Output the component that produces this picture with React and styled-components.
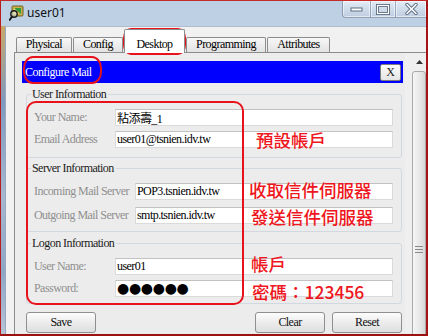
import React from 'react';
import styled, { createGlobalStyle } from 'styled-components';

const GlobalStyle = createGlobalStyle`
  html, body { margin: 0; padding: 0; background: #ffffff; }
  body { font-family: "Liberation Serif", "Noto Sans CJK TC", serif; }
  * { box-sizing: border-box; }
`;

const Window = styled.div`
  position: relative;
  width: 428px;
  height: 336px;
  overflow: hidden;
  border-top: 1px solid #c42a2a;
  border-left: 1px solid #b81c1c;
  border-right: 2px solid #a51414;
  border-bottom: 2px solid #9c1010;
  background: linear-gradient(180deg, #bccfe3 0%, #c8d8ea 45%, #d9e5f1 100%);
  display: flex;
  flex-direction: column;
`;

const TitleBar = styled.div`
  height: 25px;
  flex: none;
  display: flex;
  align-items: flex-start;
`;

const AppIcon = styled.svg`
  margin: 4px 0 0 8px;
  flex: none;
`;

const TitleText = styled.span`
  margin: 4px 0 0 3px;
  font-family: "Noto Sans", "DejaVu Sans", sans-serif;
  font-size: 12px;
  line-height: 16px;
  color: #111;
`;

const CaptionGroup = styled.div`
  margin-left: auto;
  height: 17px;
  display: flex;
  border: 1px solid rgba(80, 100, 130, 0.55);
  border-top: none;
  border-right: none;
  border-radius: 0 0 0 4px;
  overflow: hidden;
  background: linear-gradient(180deg, #e4ecf6 0%, #cfdcea 50%, #bfcde0 100%);
`;

const CaptionButton = styled.div`
  width: ${p => p.$w}px;
  display: flex;
  align-items: center;
  justify-content: center;
  border-right: 1px solid rgba(80, 100, 130, 0.45);
  box-shadow: inset 0 0 0 1px rgba(255, 255, 255, 0.55);
  &:last-child { border-right: none; }
`;

const Body = styled.div`
  flex: 1;
  display: flex;
  min-height: 0;
`;

const LeftStrip = styled.div`
  width: 4px;
  flex: none;
  background: linear-gradient(180deg, #c9a868 0%, #7f9ac0 25%, #a6b7cf 55%, #8ea6c6 80%, #b7c4d6 100%);
`;

const Client = styled.div`
  flex: 1;
  display: flex;
  flex-direction: column;
  background: #f1f1f1;
  border-left: 1px solid #96a8bd;
  border-top: 1px solid #aebdcd;
  min-width: 0;
`;

const TabRow = styled.div`
  height: 25px;
  flex: none;
  display: flex;
  align-items: flex-end;
  gap: 1px;
  padding-left: 10px;
`;

const Tab = styled.div`
  width: ${p => p.$w}px;
  height: ${p => (p.$active ? 24 : 15)}px;
  margin-bottom: ${p => (p.$active ? -1 : 0)}px;
  position: relative;
  z-index: ${p => (p.$active ? 1 : 0)};
  border: 1px solid #8c8c8c;
  border-bottom: none;
  border-radius: 2px 2px 0 0;
  background: ${p => (p.$active ? '#ffffff' : 'linear-gradient(180deg, #f7f7f7 0%, #e2e2e2 100%)')};
  display: flex;
  align-items: flex-end;
  justify-content: center;
  padding-bottom: ${p => (p.$active ? 2 : 1)}px;
  font-size: 12px;
  line-height: 13px;
  letter-spacing: -0.55px;
  color: #000;
`;

const Panel = styled.div`
  flex: 1;
  margin-left: 8px;
  display: flex;
  padding: 8px 0 0 7px;
  background: #ececec;
  border-top: 1px solid #8c8c8c;
  border-left: 1px solid #8c8c8c;
  min-height: 0;
`;

const Content = styled.div`
  width: 381px;
  flex: none;
  display: flex;
  flex-direction: column;
`;

const BlueBar = styled.div`
  height: 22px;
  background: #0000ff;
  display: flex;
  align-items: center;
  justify-content: space-between;
  padding: 0 2px 0 3px;
  color: #ffffff;
  font-size: 12px;
  letter-spacing: -0.55px;
`;

const CloseBox = styled.div`
  width: 21px;
  height: 17px;
  display: flex;
  align-items: center;
  justify-content: center;
  border: 1px solid #7c7c7c;
  border-radius: 2px;
  background: linear-gradient(180deg, #fbfbfb 0%, #e4e4e4 100%);
  color: #222;
  font-size: 12px;
  letter-spacing: 0;
`;

const Group = styled.div`
  position: relative;
  margin: ${p => p.$mt}px 1px 0 4px;
  padding: 14px 8px ${p => p.$pb}px 7px;
  border: 1px solid #d2d8df;
  border-radius: 3px;
  display: flex;
  flex-direction: column;
  gap: ${p => p.$gap}px;
`;

const GroupTitle = styled.span`
  position: absolute;
  left: 4px;
  top: -8px;
  padding: 0 2px 0 1px;
  background: #ececec;
  font-size: 12px;
  line-height: 14px;
  letter-spacing: -0.55px;
  color: #1c1c1c;
`;

const Row = styled.div`
  display: flex;
  align-items: center;
  height: 17px;
`;

const Label = styled.span`
  width: ${p => p.$w}px;
  flex: none;
  font-size: 12px;
  letter-spacing: -0.55px;
  color: #8f8f8f;
  white-space: nowrap;
`;

const Field = styled.div`
  flex: 1;
  height: 17px;
  background: #ffffff;
  border: 1px solid #dadada;
  border-top-color: #c2c2c2;
  padding: 0 1px;
  display: flex;
  align-items: center;
  font-size: 12px;
  letter-spacing: -0.55px;
  color: #000;
  white-space: nowrap;
  overflow: hidden;
`;

const Dots = styled.span`
  font-family: "DejaVu Sans", sans-serif;
  font-size: 14px;
  line-height: 15px;
  letter-spacing: -0.3px;
  color: #000;
`;

const ButtonRow = styled.div`
  margin: 8px 1px 0 4px;
  display: flex;
  justify-content: space-between;
`;

const ButtonGroup = styled.div`
  display: flex;
  gap: 7px;
`;

const Button = styled.div`
  width: 70px;
  height: 21px;
  display: flex;
  align-items: center;
  justify-content: center;
  border: 1px solid #8f8f8f;
  border-radius: 3px;
  background: linear-gradient(180deg, #fdfdfd 0%, #ececec 50%, #dedede 100%);
  font-size: 12px;
  letter-spacing: -0.55px;
  color: #111;
`;

const ScrollBar = styled.div`
  flex: 1;
  margin-left: 2px;
  margin-top: -8px;
  padding-left: 7px;
  display: flex;
  flex-direction: column;
  background: #efefef;
`;

const ArrowBox = styled.div`
  width: 14px;
  height: 18px;
  flex: none;
  display: flex;
  align-items: center;
  justify-content: center;
`;

const Thumb = styled.div`
  width: 14px;
  height: 356px;
  flex: none;
  border: 1px solid #a9a9a9;
  border-radius: 3px;
  background: linear-gradient(90deg, #f6f6f6 0%, #e6e6e6 60%, #d8d8d8 100%);
  display: flex;
  align-items: center;
  justify-content: center;
`;

const RedOutline = styled.div`
  position: absolute;
  left: ${p => p.$x - 1}px;
  top: ${p => p.$y - 1}px;
  width: ${p => p.$w}px;
  height: ${p => p.$h}px;
  border: 2px solid #e8121c;
  border-radius: ${p => p.$r};
  pointer-events: none;
`;

const RedNote = styled.span`
  position: absolute;
  left: ${p => p.$x - 1}px;
  top: ${p => p.$y - 1}px;
  font-family: "Noto Sans CJK TC", "Noto Sans", sans-serif;
  font-size: 17.5px;
  font-weight: 500;
  line-height: 1;
  color: #ee1620;
  white-space: nowrap;
`;

const tabs = [
  { label: 'Physical', w: 56 },
  { label: 'Config', w: 50 },
  { label: 'Desktop', w: 61, active: true },
  { label: 'Programming', w: 80 },
  { label: 'Attributes', w: 63 },
];

const groups = [
  {
    title: 'User Information', mt: 11, gap: 5, pb: 9, lw: 81,
    rows: [
      { label: 'Your Name:', value: '粘添壽_1' },
      { label: 'Email Address', value: 'user01@tsnien.idv.tw' },
    ],
  },
  {
    title: 'Server Information', mt: 10, gap: 7, pb: 7, lw: 101,
    rows: [
      { label: 'Incoming Mail Server', value: 'POP3.tsnien.idv.tw' },
      { label: 'Outgoing Mail Server', value: 'smtp.tsnien.idv.tw' },
    ],
  },
  {
    title: 'Logon Information', mt: 11, gap: 5, pb: 6, lw: 81,
    rows: [
      { label: 'User Name:', value: 'user01' },
      { label: 'Password:', value: '●●●●●●', secret: true },
    ],
  },
];

const notes = [
  { text: '預設帳戶', x: 256, y: 131 },
  { text: '收取信件伺服器', x: 249, y: 181 },
  { text: '發送信件伺服器', x: 251, y: 208 },
  { text: '帳戶', x: 251, y: 255 },
  { text: '密碼：123456', x: 252, y: 283 },
];

export default function App() {
  return (
    <>
      <GlobalStyle />
      <Window>
        <TitleBar>
          <AppIcon width="15" height="16" viewBox="0 0 15 16">
            <rect x="3" y="1" width="11" height="10" rx="1" fill="#c9b24e" stroke="#6f6020" strokeWidth="1" />
            <path d="M5 3 L12 3 L12 9 Z" fill="#2f9a3a" />
            <path d="M5 3 L10 9 L5 9 Z" fill="#e8d77a" />
            <circle cx="5" cy="9" r="3.2" fill="rgba(220,240,255,0.5)" stroke="#1a1a1a" strokeWidth="1.4" />
            <path d="M3 11.5 L0.8 14.8" stroke="#1a1a1a" strokeWidth="2" strokeLinecap="round" />
          </AppIcon>
          <TitleText>user01</TitleText>
          <CaptionGroup>
            <CaptionButton $w={28}>
              <svg width="13" height="6" viewBox="0 0 13 6">
                <rect x="1" y="2" width="11" height="3" fill="#ffffff" stroke="#5d6d82" strokeWidth="1" />
              </svg>
            </CaptionButton>
            <CaptionButton $w={25}>
              <svg width="14" height="11" viewBox="0 0 14 11">
                <rect x="1.5" y="1.5" width="11" height="8" fill="none" stroke="#5d6d82" strokeWidth="3" />
                <rect x="1.5" y="1.5" width="11" height="8" fill="none" stroke="#ffffff" strokeWidth="1.2" />
              </svg>
            </CaptionButton>
            <CaptionButton $w={30}>
              <svg width="13" height="12" viewBox="0 0 13 12">
                <path d="M2 1.5 L11 10.5 M11 1.5 L2 10.5" stroke="#5d6d82" strokeWidth="3.4" strokeLinecap="round" />
                <path d="M2 1.5 L11 10.5 M11 1.5 L2 10.5" stroke="#ffffff" strokeWidth="1.6" strokeLinecap="round" />
              </svg>
            </CaptionButton>
          </CaptionGroup>
        </TitleBar>
        <Body>
          <LeftStrip />
          <Client>
            <TabRow>
              {tabs.map(t => (
                <Tab key={t.label} $w={t.w} $active={t.active}>{t.label}</Tab>
              ))}
            </TabRow>
            <Panel>
              <Content>
                <BlueBar>
                  <span>Configure Mail</span>
                  <CloseBox>X</CloseBox>
                </BlueBar>
                {groups.map(g => (
                  <Group key={g.title} $mt={g.mt} $gap={g.gap} $pb={g.pb}>
                    <GroupTitle>{g.title}</GroupTitle>
                    {g.rows.map(r => (
                      <Row key={r.label}>
                        <Label $w={g.lw}>{r.label}</Label>
                        <Field>{r.secret ? <Dots>{r.value}</Dots> : r.value}</Field>
                      </Row>
                    ))}
                  </Group>
                ))}
                <ButtonRow>
                  <Button>Save</Button>
                  <ButtonGroup>
                    <Button>Clear</Button>
                    <Button>Reset</Button>
                  </ButtonGroup>
                </ButtonRow>
              </Content>
              <ScrollBar>
                <ArrowBox>
                  <svg width="7" height="4" viewBox="0 0 7 4">
                    <path d="M0 4 L3.5 0 L7 4 Z" fill="#333" />
                  </svg>
                </ArrowBox>
                <Thumb>
                  <svg width="8" height="7" viewBox="0 0 8 7">
                    <path d="M0 0.5 H8 M0 3.5 H8 M0 6.5 H8" stroke="#8a8a8a" strokeWidth="1" />
                  </svg>
                </Thumb>
              </ScrollBar>
            </Panel>
          </Client>
        </Body>
        <RedOutline $x={123} $y={28} $w={63} $h={27} $r="8px / 10px" />
        <RedOutline $x={23} $y={56} $w={79} $h={28} $r="10px / 12px" />
        <RedOutline $x={26} $y={101} $w={218} $h={204} $r="10px" />
        {notes.map(n => (
          <RedNote key={n.text} $x={n.x} $y={n.y}>{n.text}</RedNote>
        ))}
      </Window>
    </>
  );
}
